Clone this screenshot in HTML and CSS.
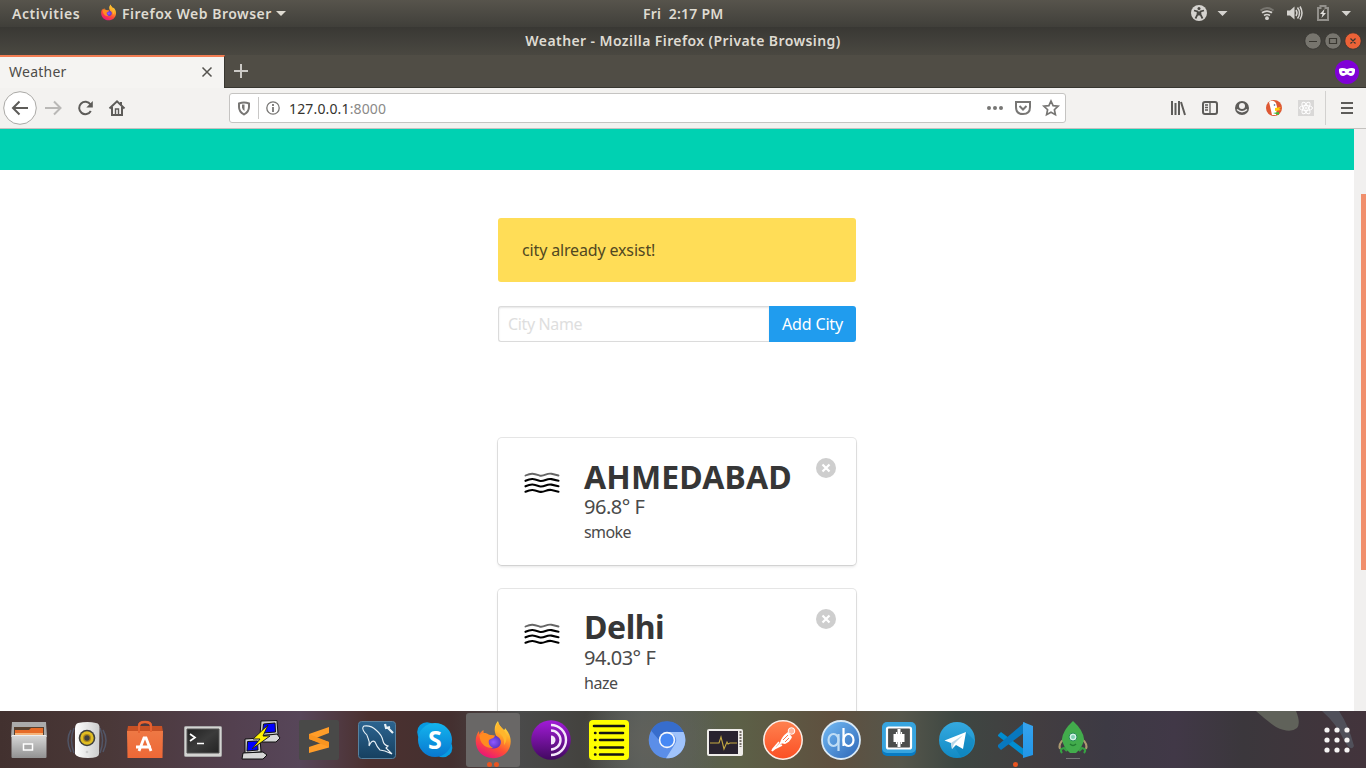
FILE: index.html
```html
<!DOCTYPE html>
<html lang="en">
<head>
<meta charset="utf-8">
<title>Weather</title>
<link rel="stylesheet" href="styles.css">
</head>
<body>
<svg class="defs" width="0" height="0">
  <defs>
    <linearGradient id="ff" x1="0.8" y1="0" x2="0.3" y2="1"><stop offset="0" stop-color="#fff44f"/><stop offset=".35" stop-color="#ffa526"/><stop offset=".65" stop-color="#ff4f35"/><stop offset="1" stop-color="#e8127c"/></linearGradient>
    <radialGradient id="globe"><stop offset="0" stop-color="#9059ff"/><stop offset="1" stop-color="#5b35c5"/></radialGradient>
    <linearGradient id="grey" x2="0" y2="1"><stop stop-color="#d8d8d8"/><stop offset="1" stop-color="#929292"/></linearGradient>
    <linearGradient id="white" x2="1" y2="0"><stop stop-color="#fff"/><stop offset="1" stop-color="#ccc"/></linearGradient>
    <linearGradient id="bag" x2="0" y2="1"><stop stop-color="#ee7844"/><stop offset="1" stop-color="#ee6837"/></linearGradient>
    <linearGradient id="term" x2="1" y2="1"><stop stop-color="#222"/><stop offset=".5" stop-color="#3b3b3b"/><stop offset="1" stop-color="#242424"/></linearGradient>
    <linearGradient id="my" x2="0" y2="1"><stop stop-color="#2c6490"/><stop offset="1" stop-color="#164060"/></linearGradient>
    <linearGradient id="sky" x2="0" y2="1"><stop stop-color="#13b5ee"/><stop offset="1" stop-color="#0877d0"/></linearGradient>
    <linearGradient id="plane" x2="0" y2="1"><stop stop-color="#35a9df"/><stop offset="1" stop-color="#128bc5"/></linearGradient>
    <linearGradient id="tor" x2="0" y2="1"><stop stop-color="#a21bd8"/><stop offset="1" stop-color="#420960"/></linearGradient>
    <linearGradient id="post" x2="0" y2="1"><stop stop-color="#ff8250"/><stop offset="1" stop-color="#fb4f24"/></linearGradient>
    <linearGradient id="qb" x2="1" y2="1"><stop stop-color="#75bdf6"/><stop offset="1" stop-color="#2c65b6"/></linearGradient>
    <linearGradient id="code" x2="0" y2="1"><stop stop-color="#36a3ee"/><stop offset="1" stop-color="#2296e8"/></linearGradient>
    <symbol id="firefox" viewBox="0 0 40 40">
      <path fill="url(#ff)" d="M20 38.200C10 38 2.700 30.800 2.700 21c0-4 1.300-7.500 3.300-10l.4 3.500c1-2 2.200-3.400 4-4.500l.3 3.500c2 .1 3.600.8 4.800 1.800 3-.4 6.500.7 8.500 2.900-.5-3-2-4-2.300-8C21.500 6.500 23 3 25 1c.5 4 3 6 6 9 .7-.3 1-1 1-2 4 4.500 5.700 9 5.700 13.500C37.500 31.500 30 38.200 20 38.200z"/>
      <path fill="url(#globe)" d="M13 20c2-1.500 4-2 6-3 2-2.500 7-.8 8.500 3 1.500 4.500-2 8.500-6.500 8.500-4 0-8.500-2.500-8-8.500z"/>
      <path fill="#ff8b20" d="M6.500 15c3-3 7-2.500 9.500-.3l6 .8c-.5 2.500-3.500 3-6 4.500-1 4 1 6.500 4.500 8-8 1-14-5-14-13z"/>
      <path fill="#ffb62c" d="M25 2c1 5 9 8 8.500 16 0 3-1 5-2.500 7 1-8-3-11-8-15 0-3 .5-6 2-8z"/>
    </symbol>
    <symbol id="waves" viewBox="0 0 36 22">
      <g fill="none" stroke="#000" stroke-width="2.100" stroke-linecap="round"><path stroke="#666" stroke-width="1.900" d="M1.500 3.500c6-2.700 8-2 14 0 5 1.200 7-2.800 12-1.700l7 1.700"/><path d="M1.500 8.800c6-2.700 8-2 14 0 5 1.200 7-2.800 12-1.700l7 1.700M1.500 14.300c6-2.700 8-2 14 0 5 1.200 7-2.800 12-1.700l7 1.700M1.500 19.700c6-2.700 8-2 14 0 5 1.200 7-2.800 12-1.700l7 1.700"/></g>
    </symbol>
    <symbol id="delete" viewBox="0 0 20 20"><circle cx="10" cy="10" r="10" fill="#cecece"/><path d="m6.500 6.500 7 7m0-7-7 7" stroke="#fff" stroke-width="2.200"/></symbol>
  </defs>
</svg>

<header class="topbar">
  <span class="activities">Activities</span>
  <svg class="app-icon" width="17" height="17"><use href="#firefox"/></svg>
  <span class="app-name">Firefox Web Browser</span>
  <i class="caret"></i>
  <span class="clock">Fri&nbsp; 2:17 PM</span>
  <svg class="status" width="170" height="28" viewBox="1186 0 170 28">
    <circle cx="1199" cy="13" r="8" fill="#d5d3cf"/><circle cx="1199" cy="8.500" r="1.500" fill="#484742"/><path d="m1194 10.500 3.500 1v3l-2 4m8.500-8-3.500 1v3l2 4m-3.500-7v4" fill="none" stroke="#484742" stroke-width="1.700"/>
    <path d="M1217.500 11h10l-5 5zM1341.500 11h9.500l-4.700 5z" fill="#d5d3cf"/>
    <path d="M1260.500 10.500q6.500-5 13 0" fill="none" stroke="#77756f" stroke-width="2"/><path d="M1262 12.800q5-3.500 10 0M1264 15.500q3-2 6 0" fill="none" stroke="#d5d3cf" stroke-width="1.700"/><circle cx="1267" cy="18.200" r="1.900" fill="#d5d3cf"/>
    <path d="M1287 10.500h3l4.500-4v13l-4.500-4h-3z" fill="#d5d3cf"/><path d="M1296 10q2 3 0 6m1.500-8.500q4 5.500 0 11M1300 6.500q4 6.500 0 13" fill="none" stroke="#d5d3cf" stroke-width="1.500"/>
    <path d="M1318 8h2.500V6h5v2h2.500v12h-10z" fill="none" stroke="#92908b" stroke-width="2"/><path d="m1324.500 9-4.500 5h2.500l-1 4 4.500-5h-2.500z" fill="#e2e0dd"/>
  </svg>
</header>

<div class="titlebar">
  <span class="window-title">Weather - Mozilla Firefox (Private Browsing)</span>
  <svg class="window-buttons" width="58" height="20" viewBox="0 0 58 20">
    <g stroke="#353430" stroke-width=".8"><circle cx="9" cy="10" r="8.200" fill="#77756e"/><circle cx="29" cy="10" r="8.200" fill="#77756e"/><circle cx="49" cy="10" r="8.200" fill="#ec6237"/></g>
    <path d="M5 10.500h8M25.500 7.500h7v5h-7zM46.500 7.500l5 5m0-5-5 5" fill="none" stroke="#393731" stroke-width="1.200"/>
  </svg>
</div>

<div class="tabs">
  <div class="tab"><span>Weather</span><svg width="12" height="12"><path d="m1.500 1.500 9 9m0-9-9 9" stroke="#55534f" stroke-width="1.500"/></svg></div>
  <svg class="new-tab" width="16" height="16"><path d="M8 1v14M1 8h14" stroke="#cbc9c5" stroke-width="2"/></svg>
  <svg class="private" width="24" height="24"><circle cx="12" cy="12" r="12" fill="#8000d7"/><path fill="#fff" fill-rule="evenodd" d="M4 9c2-1.500 5-1 8 0 3-1 6-1.500 8 0 .3 4-1 7-4 7-2 0-2.500-1.500-4-1.500S10 16 8 16c-3 0-4.300-3-4-7zm2.500 3q2.500-2 4 .5-2.500 1-4-.5zm11 0q-2.500-2-4 .5 2.500 1 4-.5z"/></svg>
</div>

<nav class="toolbar">
  <svg class="nav-icons" width="128" height="40" viewBox="0 88 128 40" fill="none" stroke="#5d5c59" stroke-width="2">
    <circle cx="20" cy="108" r="16.300" fill="#fff" stroke="#aaa9a6" stroke-width="1"/><path d="M28 108H13m6.500-6.500L13 108l6.500 6.500"/>
    <path stroke="#b9b8b6" d="M45 108h15m-6-6.500 6.500 6.500-6.500 6.500"/>
    <path d="M90.500 104.500a6.200 6.200 0 1 0 .3 6.500"/><path stroke="none" fill="#5d5c59" d="M92.800 101v6.500h-6.500z"/>
    <path d="m109.500 108.500 7.500-7.200 7.500 7.200M112 107v8h10v-8"/><path stroke-width="1.400" d="M115.500 115v-6h3v6"/><path stroke-width="2" d="M121 102v3"/>
  </svg>
  <div class="urlbar">
    <svg width="54" height="28" viewBox="230 94 54 28" fill="none"><path d="M239 103.500q5-2.200 10 0v3.500c0 3-1.500 5.500-5 7.500-3.500-2-5-4.500-5-7.500z" stroke="#777674" stroke-width="2"/><path d="M244.500 104.500h-2.500v3q.3 2 2.500 3.500z" fill="#777674"/><path d="M258.500 97v22" stroke="#c9c8c7"/><circle cx="273" cy="108" r="6.200" stroke="#777674" stroke-width="1.300"/><path d="M273 104v2m0 1v5" stroke="#777674" stroke-width="1.800"/></svg>
    <span class="url">127.0.0.1<span class="port">:8000</span></span>
    <svg class="url-actions" width="80" height="28" viewBox="985 94 80 28" fill="none" stroke="#777674" stroke-width="2"><g fill="#777674" stroke="none"><circle cx="989" cy="108" r="2"/><circle cx="995" cy="108" r="2"/><circle cx="1001" cy="108" r="2"/></g><path d="M1016 102h14v5q0 7-7 7t-7-7z"/><path d="m1019.500 106 3.500 3.500 3.500-3.500"/><path stroke-width="1.700" d="m1051 101 2.100 4.700 5 .5-3.700 3.500 1 5-4.400-2.500-4.400 2.500 1-5-3.700-3.500 5-.5z"/></svg>
  </div>
  <svg class="tools" width="196" height="40" viewBox="1170 88 196 40" fill="none" stroke="#5d5c59" stroke-width="2">
    <path d="M1172 101v14m3.500-12v12m3.500-14v14m2-13 4 13"/><rect x="1203" y="102" width="14" height="12" rx="2"/><path stroke-width="1.300" d="M1210 102v12m-5-9h3m-3 2.500h3m-3 2.500h3"/>
    <circle cx="1242" cy="108" r="7" fill="#5d5c59" stroke="none"/><circle cx="1242" cy="106" r="3" fill="#f3f2f1" stroke="none"/><path stroke="#f3f2f1" stroke-width="1.500" d="M1237 109.500q5 4.500 10 0"/>
    <circle cx="1274" cy="108" r="8" fill="#de5833" stroke="none"/><path d="M1269 102q4-3 7 1l1 4-1 8h-4l-2-9z" fill="#fff" stroke="none"/><path d="m1275 108 6-1-2 2 2 1-6 1z" fill="#ffcf0b" stroke="none"/><path d="m1273 113 6-1v3z" fill="#3dbd38" stroke="none"/><circle cx="1274.500" cy="105" r=".8" fill="#345c86" stroke="none"/>
    <path d="M1298 100h16v16h-16z" fill="#d9d8d7" stroke="none"/><g stroke="#fff" stroke-width="1"><ellipse cx="1306" cy="108" rx="6.500" ry="2.500"/><ellipse cx="1306" cy="108" rx="6.500" ry="2.500" transform="rotate(60 1306 108)"/><ellipse cx="1306" cy="108" rx="6.500" ry="2.500" transform="rotate(120 1306 108)"/><circle cx="1306" cy="108" r="1"/></g>
    <path stroke="#d2d1cf" stroke-width="1" d="M1325.500 91v34"/><path d="M1341 103h12m-12 5h12m-12 5h12"/>
  </svg>
</nav>

<main class="viewport">
  <div class="page">
    <div class="hero"></div>
    <div class="column">
      <div class="notice">city already exsist!</div>
      <form class="field"><input class="city" type="text" placeholder="City Name"><button class="add" type="button">Add City</button></form>
      <div class="cards">
        <article class="card"><svg class="weather" width="36" height="22"><use href="#waves"/></svg><div class="info"><strong class="name upper">AHMEDABAD</strong><span class="temp">96.8° F</span><span class="desc smoke">smoke</span></div><svg class="delete" width="20" height="20"><use href="#delete"/></svg></article>
        <article class="card"><svg class="weather" width="36" height="22"><use href="#waves"/></svg><div class="info"><strong class="name">Delhi</strong><span class="temp">94.03° F</span><span class="desc">haze</span></div><svg class="delete" width="20" height="20"><use href="#delete"/></svg></article>
      </div>
    </div>
  </div>
  <div class="scrollbar"><div class="thumb"></div></div>
</main>

<footer class="dock">
  <div class="slot"><svg viewBox="0 0 40 40"><path d="M3 2h34l1 15H2z" fill="#ababab"/><path d="M5 7h30v11H5z" fill="#57402f"/><path d="M6 10h14l2-2h12v7H6z" fill="#e66b28"/><path d="M6 13h28v2H6z" fill="#f5b47b"/><rect x="2.500" y="15" width="35" height="23" rx="1" fill="url(#grey)"/><path d="M3 15.500h34" stroke="#eee"/><rect x="14.500" y="24" width="9" height="6" fill="#aaa" stroke="#fff" stroke-width="1.500"/></svg></div>
  <div class="slot"><svg viewBox="0 0 40 40"><path d="M4 10q-6 10 0 22M7 8q-5 12 0 25M36 10q6 10 0 22M33 8q5 12 0 25" fill="none" stroke="#5a7395" stroke-width="1.500" opacity=".5"/><path d="M11 3q10-2 18 0 4 .5 3.500 6L32 34q0 4-11 4T8 34L8 9q0-5 3-6z" fill="url(#white)"/><circle cx="20" cy="18" r="8.300" fill="#40413d"/><circle cx="20" cy="18" r="6.700" fill="#e0bd22"/><circle cx="20" cy="18" r="4" fill="#ad861b"/><circle cx="20" cy="18" r="2.700" fill="#404040"/><circle cx="20" cy="32" r="1.300" fill="#ccc"/></svg></div>
  <div class="slot"><svg viewBox="0 0 40 40"><path d="M14 12V6q0-4 6-4t6 4v6" fill="none" stroke="#db5528" stroke-width="2.500"/><path d="M3 6h34l1 6H2z" fill="#c75125"/><path d="M2 11h36l-.5 27h-35z" fill="url(#bag)"/><path d="m14 31 5-13h2l5 13M11 27h15" fill="none" stroke="#fff" stroke-width="2.800"/><path d="M14 13V6q0-4 6-4t6 4v6" fill="none" stroke="#e66332" stroke-width="2"/></svg></div>
  <div class="slot"><svg viewBox="0 0 40 40"><rect x="1.500" y="6.500" width="37" height="30" rx="1" fill="#d4d4d2" stroke="#a9a9a9"/><path d="M4 9h32v24H4z" fill="url(#term)" stroke="#555"/><path d="m7 14 5 3.500-5 3.500m7 2.500h7" fill="none" stroke="#fff" stroke-width="1.700"/></svg></div>
  <div class="slot"><svg viewBox="0 0 40 40"><g stroke="#111" stroke-width="1"><path d="m20 1 16-.5 1 14-18 1z" fill="#c9c9c9"/><path d="m22.500 4 11.500-1 .5 9-13 1z" fill="#00f"/><path d="m19 16 17-2 3 4-4 4H17z" fill="#d7d7d7"/><path d="m4 19 15-1 1 14-16 1z" fill="#d0d0d0"/><path d="m6.500 21.500 10-.5.500 9-11 1z" fill="#00f"/><path d="m2 33 20-1 4 3-4 4H1z" fill="#d7d7d7"/></g><path d="M27 5 12 19h7l-8 10 18-13h-7z" fill="#fff200" stroke="#222"/></svg></div>
  <div class="slot"><svg viewBox="0 0 40 40"><rect width="40" height="40" rx="2" fill="#494948"/><path d="m10 14 20-7v6l-13 5 13 4v5.500L10 33v-6l12-4-12-4z" fill="#ff9d29"/><path d="m10 14 20 8v5L10 19z" fill="#f89420"/></svg></div>
  <div class="slot"><svg viewBox="0 0 40 40"><rect x="1.500" y="1.500" width="37" height="37" rx="3" fill="url(#my)" stroke="#57819f"/><path d="M12 26q1-4-1-8-1-4-3-5-4-5-1-7 7-1 12 4 6 5 7 11 1 4 5 5l-2 2 6 6-7-3-5-1q-3-3-5-8-3-3-6 4z" fill="none" stroke="#e9f1f6" stroke-width="1.100"/><path d="m28 4 1 4 4-1m-3 0 6 6" fill="none" stroke="#e9f1f6" stroke-width="2.200"/></svg></div>
  <div class="slot"><svg viewBox="0 0 40 40"><circle cx="12" cy="12" r="9.800" fill="#079be1"/><circle cx="28" cy="28" r="9.300" fill="#079be1"/><circle cx="20" cy="20" r="17" fill="url(#sky)"/><text x="20" y="28.500" text-anchor="middle" class="skype">S</text></svg></div>
  <div class="slot active"><svg viewBox="0 0 40 40"><use href="#firefox"/></svg><i class="dot"></i><i class="dot"></i></div>
  <div class="slot"><svg viewBox="0 0 40 40"><circle cx="20" cy="20" r="19.800" fill="url(#tor)"/><path d="M20 5a15 15 0 0 1 0 30M20 10.500a9.500 9.500 0 0 1 0 19" fill="none" stroke="#f4e8fa" stroke-width="2.400"/><path d="M20 15.500a4.500 4.500 0 0 1 0 9z" fill="#f4e8fa"/></svg></div>
  <div class="slot"><svg viewBox="0 0 40 40"><rect width="40" height="40" rx="4" fill="#ff0"/><path d="M5 6h30M11 13h23M11 20h23M11 27.500h23M11 34.500h23" stroke="#151515" stroke-width="2.600" stroke-linecap="round"/><path d="M6 13h.5M6 20h.5m-.5 7.500h.5m-.5 7h.5" stroke="#151515" stroke-width="2.400" stroke-linecap="round"/></svg></div>
  <div class="slot"><svg viewBox="0 0 40 40"><circle cx="20" cy="20" r="18.300" fill="#5b8ee8"/><path d="M4 10.500a18.300 18.300 0 0 1 32.500 1.500H20L12 20z" fill="#376dcc"/><path d="M36.500 12a18.300 18.300 0 0 1-17.500 26.300L28 24q3-5-1-9l-7-3z" fill="#a0c3fb"/><circle cx="20" cy="20" r="8.200" fill="#f4f7fc"/><circle cx="20" cy="20" r="6.600" fill="#4688f4"/></svg></div>
  <div class="slot"><svg viewBox="0 0 40 40"><rect x="2" y="9" width="36" height="27" rx="2" fill="#eeece9"/><path d="M4 11h29v23H4z" fill="#29232f"/><path d="M5 23h9l2-6 3 12 3-7 1 2 2-1h7" fill="none" stroke="#c5aa42" stroke-width="1.100"/><path d="M35.500 11v16" stroke="#77716b" stroke-width="2" stroke-dasharray="2 1"/></svg></div>
  <div class="slot"><svg viewBox="0 0 40 40"><circle cx="20" cy="20" r="19.200" fill="url(#post)" stroke="#fbefe9" stroke-width="1.500"/><circle cx="28.500" cy="11" r="3.300" fill="#ffb49c" stroke="#fff"/><path d="m25 12 4 5q-2 5-7 7l-5-1q1-6 8-11z" fill="#fff"/><path d="m19 22-5 5-5 4 1-2 6-7m3 3-8 4" fill="none" stroke="#fff" stroke-width="1.600"/><path d="m20 20 5-5m-3 7 4-4" stroke="#fc774e"/></svg></div>
  <div class="slot"><svg viewBox="0 0 40 40"><circle cx="20" cy="20" r="19" fill="url(#qb)" stroke="#d9e9f6" stroke-width="1.800"/><g fill="none" stroke-width="2.200"><ellipse cx="12.500" cy="20" rx="5" ry="6" stroke="#bfddf5"/><path d="M17.500 14v17" stroke="#bfddf5"/><path d="M22.500 8v18" stroke="#fff"/><ellipse cx="27.500" cy="20" rx="5" ry="6" stroke="#fff"/></g></svg></div>
  <div class="slot"><svg viewBox="0 0 40 40"><rect x="3" y="3" width="34" height="33" rx="5" fill="#087bc3"/><rect x="3" y="2" width="34" height="31" rx="5" fill="#37a4de"/><rect x="8" y="7.500" width="24" height="21" rx="1.500" fill="#4b4d4c" stroke="#fff" stroke-width="2.200"/><path d="M14.500 14h11v8h-11z" fill="#fff"/><path d="M20 9v18" stroke="#fff" stroke-width="3"/><path d="M17.500 12v3m5-3v3m-5 6v3m5-3v3" stroke="#fff" stroke-width="1.200"/></svg></div>
  <div class="slot"><svg viewBox="0 0 40 40"><circle cx="20" cy="20" r="18" fill="url(#plane)"/><path d="m14 22 15-10 8 8a18 18 0 0 1-13 17z" fill="#087db7" opacity=".4"/><path d="M7.500 20.500 29 12l-3 17-7-4-4 4-1-6z" fill="#fff"/><path d="m14 23 12-8-9 9-2 5z" fill="#b9d7e8"/></svg></div>
  <div class="slot"><svg viewBox="0 0 40 40"><path d="m3 15 3-3 24 18v7L3 16z" fill="#008dd1"/><path d="m3 27 3 3 24-18V2L3 25z" fill="#0878bf"/><path d="m28 2 10 4v29l-10 3z" fill="url(#code)"/></svg><i class="dot"></i></div>
  <div class="slot"><svg viewBox="0 0 40 40"><path d="M11 19q-6 5-4 10M29 19q6 5 4 10" fill="none" stroke="#ad9a70" stroke-width="2"/><path d="M9 33q-3-4 2-5l3 3M31 33q3-4-2-5l-3 3" fill="none" stroke="#35a342" stroke-width="2.200"/><path d="M20 1q10 9 11 18-1 8-8 14h-6Q10 27 9 19 10 10 20 1z" fill="#42ac4c"/><circle cx="20" cy="17" r="4" fill="#d5f2e6" stroke="#278e57"/><circle cx="20" cy="17" r="2" fill="#80cfb1"/><path d="M17 24q3 3 6 0" fill="none" stroke="#237d32" stroke-width="1.500"/><path d="M13 38.500h14" stroke="#747476"/></svg></div>
  <svg class="launcher" width="28" height="28" fill="#f5f3f3"><circle cx="4" cy="4" r="2.600"/><circle cx="14" cy="4" r="2.600"/><circle cx="24" cy="4" r="2.600"/><circle cx="4" cy="14" r="2.600"/><circle cx="14" cy="14" r="2.600"/><circle cx="24" cy="14" r="2.600"/><circle cx="4" cy="24" r="2.600"/><circle cx="14" cy="24" r="2.600"/><circle cx="24" cy="24" r="2.600"/></svg>
  <svg class="petals" width="150" height="57" viewBox="1216 711 150 57"><path d="M1256 711h40q5 12 1 17-7 6-21-1-9-6-20-16z" fill="#666a5f" opacity=".85"/><path d="M1322 711h17q10 15 15 35-3 6-9-4-8-18-23-31z" fill="#545861" opacity=".8"/></svg>
</footer>
</body>
</html>
```
FILE: styles.css
```css
* { box-sizing: border-box; }
body { margin: 0; width: 1366px; height: 768px; overflow: hidden; display: flex; flex-direction: column; background: #fff; font-family: "Noto Sans", "Open Sans", sans-serif; font-size: 16px; color: #4a4a4a; white-space: nowrap; }
svg { display: block; flex: none; }
.defs { position: absolute; }

.topbar { flex: none; height: 27px; display: flex; align-items: center; padding: 0 10px 0 12px; background: linear-gradient(#57544c, #403f3a); color: #dfdbd2; font-size: 14px; font-weight: 600; }
.activities { width: 88px; letter-spacing: .58px; }
.app-icon { margin-right: 5px; margin-bottom: 2px; }
.app-name { width: 154px; letter-spacing: .5px; }
.caret { border: 5px solid transparent; border-top-color: #dfdbd2; border-bottom: 0; }
.clock { margin-left: 357px; width: 90px; padding-bottom: 1px; letter-spacing: .2px; }
.status { margin-left: auto; }

.titlebar { flex: none; height: 28px; display: grid; grid-template-columns: 62px 1fr 62px; align-items: center; background: linear-gradient(#393834, #4a4841); color: #dfdbd2; font-size: 14px; font-weight: 600; }
.window-title { grid-column: 2; justify-self: center; padding-bottom: 2px; letter-spacing: .41px; }
.window-buttons { grid-column: 3; }

.tabs { flex: none; height: 33px; display: flex; align-items: center; background: #504d45; border-bottom: 1px solid #373630; }
.tab { width: 225px; height: 33px; margin-bottom: -1px; display: flex; align-items: center; justify-content: space-between; padding: 0 11px 2px 9px; border-top: 2px solid #f27d53; border-right: 1px solid #373630; background: #f5f4f2; color: #4e4c49; font-size: 14px; letter-spacing: .25px; }
.new-tab { margin-left: 8px; }
.private { margin-left: auto; margin-right: 7px; margin-top: 1px; }

.toolbar { flex: none; height: 41px; display: flex; align-items: center; background: #f3f2f0; border-bottom: 1px solid #c4c2bf; }
.urlbar { width: 837px; height: 30px; margin-left: 101px; display: flex; align-items: center; border: 1px solid #c5c4c2; border-radius: 3px; background: #fff; }
.url { margin-left: 5px; font-size: 14px; letter-spacing: .15px; color: #35342f; }
.port { color: #8b8a88; }
.url-actions { margin-left: auto; }
.tools { margin-left: auto; }

.viewport { flex: none; height: 582px; display: flex; overflow: hidden; }
.page { width: 1354px; overflow: hidden; }
.hero { height: 41px; background: #00d1b2; }
.column { width: 358px; margin: 48px auto 0; }
.notice { height: 64px; padding: 20px 24px; border-radius: 3px; background: #ffdd57; color: #514821; line-height: 24px; letter-spacing: -.15px; }
.field { height: 36px; margin: 24px 0 96px; display: flex; }
.city { width: 271px; height: 36px; padding: 0 9px; border: 1px solid #dbdbdb; border-right: 0; border-radius: 3px 0 0 3px; box-shadow: inset 0 1px 2px rgba(10, 10, 10, .1); font: 16px "Noto Sans", sans-serif; letter-spacing: -.36px; }
.city::placeholder { color: #dedede; opacity: 1; }
.add { width: 87px; height: 36px; padding: 0; border: 0; border-radius: 0 3px 3px 0; background: #209cee; color: #fff; font: 16px "Noto Sans", sans-serif; letter-spacing: -.15px; }
.cards { display: grid; gap: 24px; }
.card { height: 127px; display: flex; align-items: flex-start; padding: 20px; border-radius: 4px; box-shadow: 0 2px 3px rgba(10, 10, 10, .1), 0 0 0 1px rgba(10, 10, 10, .1); }
.weather { margin: 14px 24px 0 6px; }
.info { flex: 1; display: flex; flex-direction: column; }
.name { height: 37px; line-height: 36px; font-size: 32px; font-weight: 700; color: #363636; letter-spacing: -.45px; }
.upper { line-height: 37px; letter-spacing: .15px; }
.temp { height: 25px; line-height: 24px; font-size: 20px; letter-spacing: -.5px; }
.desc { height: 24px; line-height: 24px; letter-spacing: -.45px; }
.smoke { letter-spacing: -.6px; }
.scrollbar { width: 12px; padding-top: 65px; background: #f1f0ef; }
.thumb { width: 5px; height: 376px; margin-left: 7px; background: #f08f6c; }

.dock { position: relative; flex: none; height: 57px; display: flex; align-items: center; background: radial-gradient(circle at 650px 30px, #61615b, transparent 70px), linear-gradient(90deg, #42312f, #4a3838 8%, #53404f 17%, #574659 22%, #4b302f 27%, #443030 33%, #4a4a4a 38%, #43423e 43%, #565e5c 47%, #5c6047 54%, #5f503f 61%, #55564b 66%, #3e4742 70%, #423d40 76%, #3d3a44 81%, #413847 86%, #3b373c 91%, #43343c); }
.slot { position: relative; z-index: 1; flex: none; width: 58px; height: 57px; display: flex; align-items: center; justify-content: center; }
.slot > svg { width: 40px; height: 40px; }
.active { width: 54px; height: 54px; margin: 0 2px; border-radius: 3px; background: #696766; }
.dot { position: absolute; left: 26.500px; bottom: 1px; width: 5px; height: 5px; border-radius: 50%; background: #e95420; }
.active .dot { left: 21px; bottom: 0; }
.active .dot + .dot { left: 28px; }
.launcher { position: relative; z-index: 1; margin-left: auto; margin-right: 15px; }
.petals { position: absolute; right: 0; top: 0; }
.skype { font: 700 25px "Open Sans", sans-serif; fill: #fff; }
```
